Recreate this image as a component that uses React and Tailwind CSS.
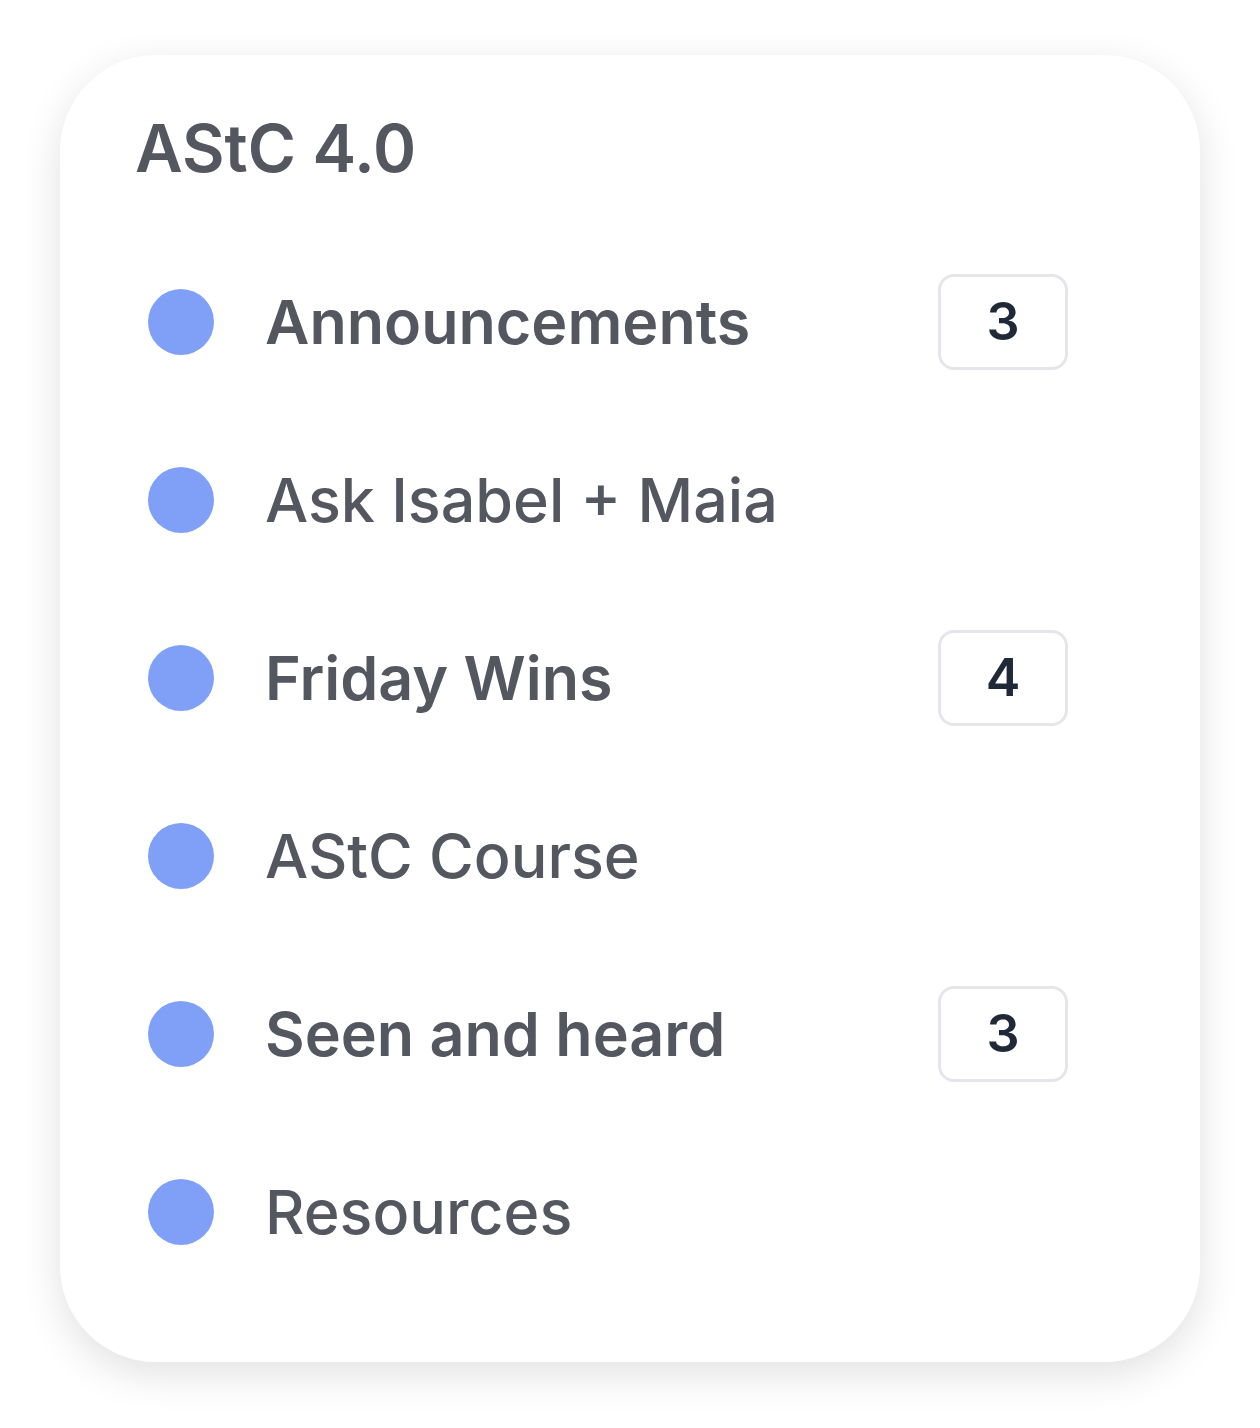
import React from 'react';

const channels = [
  { name: 'Announcements', count: 3 },
  { name: 'Ask Isabel + Maia' },
  { name: 'Friday Wins', count: 4 },
  { name: 'AStC Course' },
  { name: 'Seen and heard', count: 3 },
  { name: 'Resources' },
];

const ChannelRow = ({ name, count }) => {
  const unread = count !== undefined;
  return (
    <div className="flex items-center h-[178px] pl-[88px] pr-[132px]">
      <span className="w-[66px] h-[66px] rounded-full bg-[#80a0f8] shrink-0" />
      <span
        className={`ml-[51px] flex-1 text-[61px] leading-none text-[#545760] pt-[2px] ${
          unread ? 'font-semibold' : 'font-medium'
        }`}
      >
        {name}
      </span>
      {unread && (
        <span className="w-[130px] h-[96px] flex items-center justify-center rounded-[16px] border-[3px] border-[#e4e6eb] text-[52px] leading-none font-semibold text-[#1f2937]">
          {count}
        </span>
      )}
    </div>
  );
};

const App = () => {
  return (
    <div className="min-h-screen bg-white pt-[55px] pl-[60px] font-['Inter','Noto_Sans',sans-serif]">
      <div className="w-[1140px] h-[1307px] bg-white rounded-[96px] shadow-[0_12px_40px_rgba(0,0,0,0.12)] pt-[61px]">
        <h2 className="pl-[75px] text-[65.5px] leading-none font-semibold text-[#545760]">AStC 4.0</h2>
        <div className="mt-[51px]">
          {channels.map((c) => (
            <ChannelRow key={c.name} {...c} />
          ))}
        </div>
      </div>
    </div>
  );
};

export default App;
